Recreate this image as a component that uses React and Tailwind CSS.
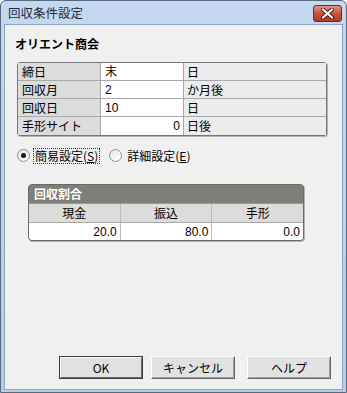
import React from 'react';

const rows = [
  { label: '締日', value: '末', unit: '日', right: false },
  { label: '回収月', value: '2', unit: 'か月後', right: false },
  { label: '回収日', value: '10', unit: '日', right: false },
  { label: '手形サイト', value: '0', unit: '日後', right: true },
];

const ratios = [
  { name: '現金', value: '20.0' },
  { name: '振込', value: '80.0' },
  { name: '手形', value: '0.0' },
];

const Radio = ({ checked }) => (
  <span className="relative flex h-[13px] w-[13px] items-center justify-center rounded-full border border-[#8e8f8f] bg-gradient-to-br from-[#e6e6e6] to-[#ffffff]">
    {checked && <span className="h-[5px] w-[5px] rounded-full bg-[#1b1b1b]" />}
  </span>
);

const Button = ({ children, primary }) => (
  <button
    type="button"
    className={
      'flex h-[23px] w-[84px] items-center justify-center bg-[#e1e1e1] text-[12px] text-black ' +
      (primary ? 'border border-[#3c3c3c]' : 'border border-[#ffffff] border-r-[#696969] border-b-[#696969]')
    }
  >
    <span
      className={
        'flex h-full w-full items-center justify-center ' +
        (primary
          ? 'border border-[#ffffff] border-r-[#696969] border-b-[#696969]'
          : 'border border-[#e3e3e3] border-r-[#a0a0a0] border-b-[#a0a0a0]')
      }
    >
      {children}
    </span>
  </button>
);

export default function App() {
  return (
    <div className="h-[393px] w-[347px] overflow-hidden rounded-t-[6px] border border-[#5a6a80] bg-gradient-to-b from-[#c4d8ef] to-[#b6cde7] font-['Liberation_Sans','Noto_Sans_CJK_JP',sans-serif] text-[12px] leading-[14px] text-black">
      <div className="flex h-[23px] items-center justify-between pl-[7px] pr-[4px]">
        <span className="font-['Noto_Sans_CJK_JP',sans-serif] text-[12.5px] text-[#1e2a3a]">回収条件設定</span>
        <div className="mt-[2px] flex h-[17px] w-[29px] items-center justify-center rounded-[3px] border border-[#6b2a20] bg-gradient-to-b from-[#e3958a] via-[#c8513f] to-[#b23a26]">
          <svg width="13" height="11" viewBox="0 0 13 11">
            <path d="M2 1.5 L11 9.5 M11 1.5 L2 9.5" stroke="#4b1d16" strokeWidth="4" strokeLinecap="round" />
            <path d="M2 1.5 L11 9.5 M11 1.5 L2 9.5" stroke="#ffffff" strokeWidth="2.2" strokeLinecap="round" />
          </svg>
        </div>
      </div>

      <div className="mx-[3px] flex h-[366px] flex-col border border-[#8da4c1] bg-[#f0f0f0]">
        <div className="flex h-[37px] items-center pl-[10px] font-['Noto_Sans_CJK_JP',sans-serif] font-bold">
          オリエント商会
        </div>

        <div className="ml-[12px] w-[310px] rounded-[3px] border border-[#767676] bg-white shadow-[1px_1px_0_#b4b4b4]">
          {rows.map((r, i) => (
            <div
              key={r.label}
              className={'flex h-[18px] ' + (i < rows.length - 1 ? 'border-b border-[#a8a8a8]' : '')}
            >
              <div className="flex w-[83px] items-center border-r border-[#a8a8a8] bg-[#dcdcdc] pl-[4px] font-['Noto_Sans_CJK_JP',sans-serif]">
                {r.label}
              </div>
              <div
                className={
                  'flex w-[83px] items-center border-r border-[#a8a8a8] bg-white ' +
                  (r.right ? 'justify-end pr-[3px]' : 'pl-[4px]')
                }
              >
                {r.value}
              </div>
              <div className="flex flex-1 items-center bg-[#ececec] pl-[3px] font-['Noto_Sans_CJK_JP',sans-serif]">
                {r.unit}
              </div>
            </div>
          ))}
        </div>

        <div className="ml-[12px] mt-[11px] flex h-[17px] items-center font-['Noto_Sans_CJK_JP',sans-serif]">
          <Radio checked />
          <span className="ml-[3px] border border-dotted border-[#333] px-[1px] leading-[14px]">
            簡易設定(<span className="underline">S</span>)
          </span>
          <span className="ml-[9px]">
            <Radio />
          </span>
          <span className="ml-[5px] leading-[14px]">
            詳細設定(<span className="underline">E</span>)
          </span>
        </div>

        <div className="ml-[23px] mt-[20px] w-[276px] overflow-hidden rounded-[4px] border border-[#6a6a66] bg-[#7f7f7a] shadow-[1px_1px_0_#b4b4b4]">
          <div className="flex h-[18px] items-center pl-[5px] font-['Noto_Sans_CJK_JP',sans-serif] font-bold text-white">
            回収割合
          </div>
          <div className="flex h-[19px] border-t border-[#9a9a96] bg-[#dcdcdc]">
            {ratios.map((c, i) => (
              <div
                key={c.name}
                className={
                  'flex flex-1 items-center justify-center font-["Noto_Sans_CJK_JP",sans-serif] ' +
                  (i < ratios.length - 1 ? 'border-r border-[#bdbdbd]' : '')
                }
              >
                {c.name}
              </div>
            ))}
          </div>
          <div className="flex h-[18px] border-t border-[#a8a8a8] bg-white">
            {ratios.map((c, i) => (
              <div
                key={c.name}
                className={
                  'flex flex-1 items-center justify-end pr-[3px] ' +
                  (i < ratios.length - 1 ? 'border-r border-[#bdbdbd]' : '')
                }
              >
                {c.value}
              </div>
            ))}
          </div>
        </div>

        <div className="mt-auto mb-[10px] ml-[54px] flex font-['Noto_Sans_CJK_JP',sans-serif]">
          <Button primary>OK</Button>
          <div className="ml-[8px]">
            <Button>キャンセル</Button>
          </div>
          <div className="ml-[12px]">
            <Button>ヘルプ</Button>
          </div>
        </div>
      </div>
    </div>
  );
}
